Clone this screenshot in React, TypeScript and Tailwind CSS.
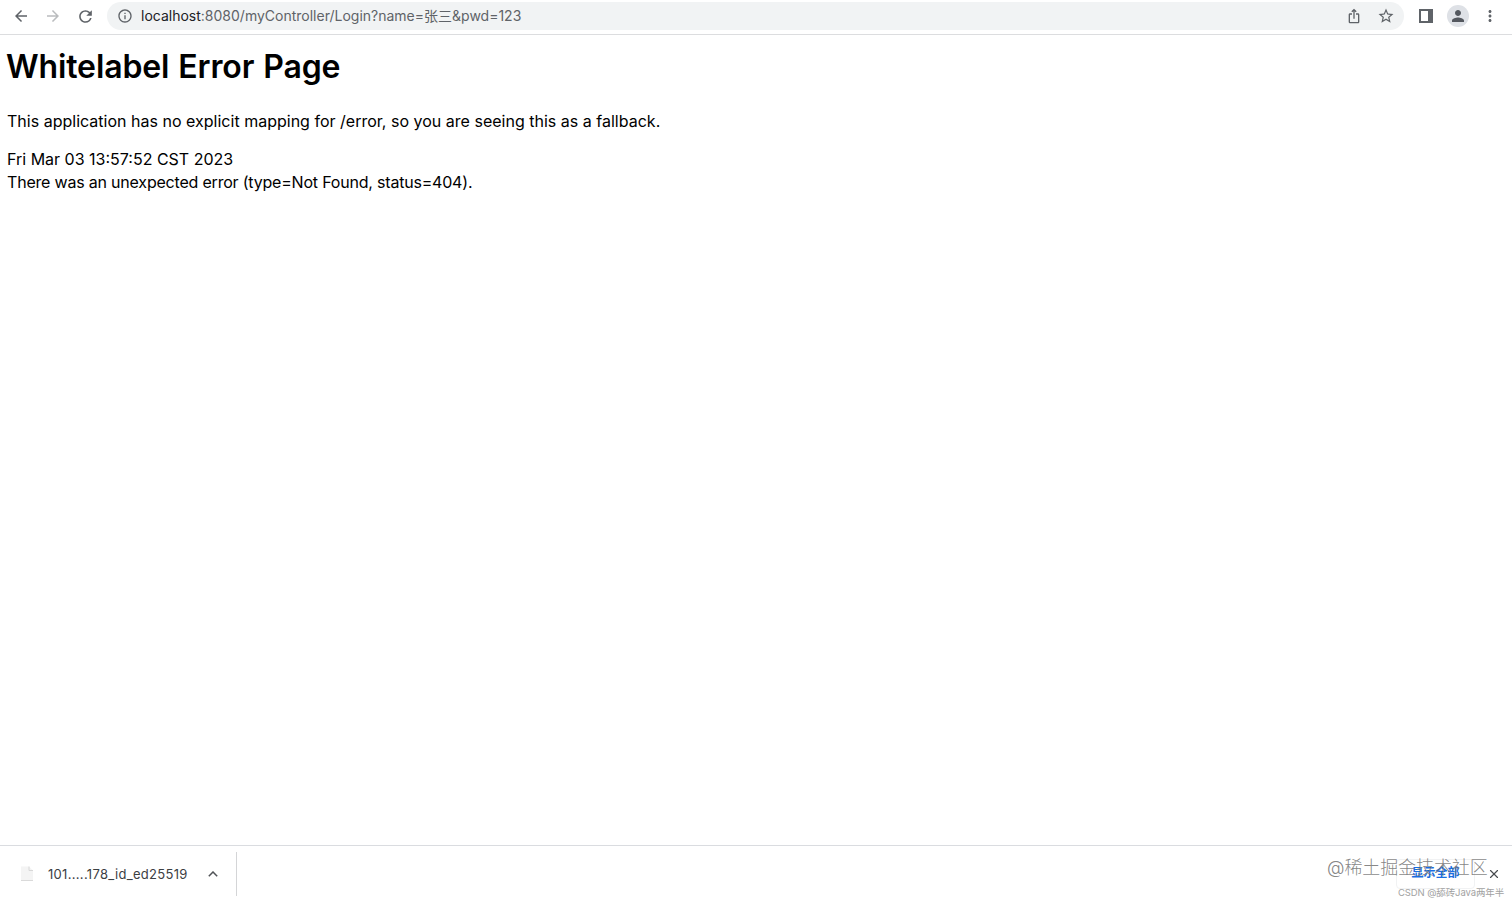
import { X } from "lucide-react";
import {
  MdArrowBack,
  MdArrowForward,
  MdInfoOutline,
  MdIosShare,
  MdMoreVert,
  MdPerson,
  MdRefresh,
  MdStarBorder,
} from "react-icons/md";

function Toolbar() {
  return (
    <header className="flex h-[35px] shrink-0 items-start border-b border-[#dcdddf] pt-[2px] text-[#5f6368]">
      <nav className="flex h-7 items-center gap-[14px] pl-3">
        <MdArrowBack aria-label="Back" className="size-[18px]" />
        <MdArrowForward aria-label="Forward" className="size-[18px] text-[#babcbe]" />
        <MdRefresh aria-label="Reload" className="size-[19px]" />
      </nav>
      <div className="ml-[12px] flex h-7 w-[1297px] items-center rounded-full bg-[#f1f3f4] pl-[10px] pr-[9px]">
        <MdInfoOutline className="size-4" />
        <span className="mb-[2px] ml-[8px] text-[14px]">
          <span className="text-[#202124]">localhost</span>
          :8080/myController/Login?name=张三&amp;pwd=123
        </span>
        <MdIosShare className="ml-auto size-4" />
        <MdStarBorder className="ml-[15px] size-[18px]" />
      </div>
      <div className="flex h-7 items-center">
        <svg aria-hidden="true" className="ml-[15px] size-[14px]" viewBox="0 0 14 14">
          <path d="M0 0h14v14H0zM2 2v10h7V2z" fill="currentColor" fillRule="evenodd" />
        </svg>
        <span className="ml-[14px] flex size-[22px] items-center justify-center rounded-full bg-[#dee1e6]">
          <MdPerson className="size-[18px] text-[#54585f]" />
        </span>
        <MdMoreVert className="ml-3 size-[18px]" />
      </div>
    </header>
  );
}

function ErrorPage() {
  return (
    <main className="grow pl-[7px] text-[16px] leading-[23px] text-black">
      <h1 className="-ml-px mt-[9px] text-[32px] font-semibold leading-[46px] tracking-[-0.12px] [word-spacing:1px]">
        Whitelabel Error Page
      </h1>
      <p className="mt-[20px] tracking-[0.01px]">
        This application has no explicit mapping for /error, so you are seeing this as a fallback.
      </p>
      <div className="mt-[15px]">Fri Mar 03 13:57:52 CST 2023</div>
      <div className="tracking-[-0.2px]">
        There was an unexpected error (type=Not Found, status=404).
      </div>
    </main>
  );
}

function DownloadShelf() {
  return (
    <footer className="relative flex h-[57px] shrink-0 items-center border-t border-[#dadce0]">
      <div className="flex h-[44px] w-[237px] items-center border-r border-[#d4d5d7] pl-5">
        <svg aria-hidden="true" className="h-4 w-[14px]" viewBox="0 0 14 16">
          <path d="M1 .5h8l4 4V15H1z" fill="#f4f4f4" />
          <path d="M9 .5v4h4" fill="none" stroke="#d8d8d8" />
          <path d="M1 14.500h12" stroke="#dadada" />
        </svg>
        <span className="ml-[14px] mt-px text-[13px] tracking-[0.31px] text-[#3c4043]">
          101.....178_id_ed25519
        </span>
        <svg aria-hidden="true" className="ml-auto mr-[18px] h-[6px] w-[10px]" viewBox="0 0 10 6">
          <path d="M.8 5.2 5 1l4.200 4.200" fill="none" stroke="#505357" strokeWidth="1.500" />
        </svg>
      </div>
      <button className="ml-auto mr-3 h-[30px] w-[79px] rounded border border-[#f1f2f3] pb-[2px] text-[12px] font-bold text-[#1a6ee0]">
        显示全部
      </button>
      <X aria-label="Close" className="mb-px mr-[11px] size-[14px] text-[#484b4f]" />
      <span className="absolute left-[1327px] top-[10px] whitespace-nowrap text-[18px] font-light leading-6 tracking-[-0.1px] text-[#777]/90">
        @稀土掘金技术社区
      </span>
      <span className="absolute left-[1398px] top-[40px] whitespace-nowrap text-[9.500px] leading-[14px] tracking-[-0.1px] text-[#a2a2a2]">
        CSDN @舔砖Java两年半
      </span>
    </footer>
  );
}

export default function App() {
  return (
    <div className="flex h-[902px] w-[1512px] flex-col overflow-hidden bg-white font-[Inter,'Noto_Sans_CJK_SC',sans-serif]">
      <Toolbar />
      <ErrorPage />
      <DownloadShelf />
    </div>
  );
}
